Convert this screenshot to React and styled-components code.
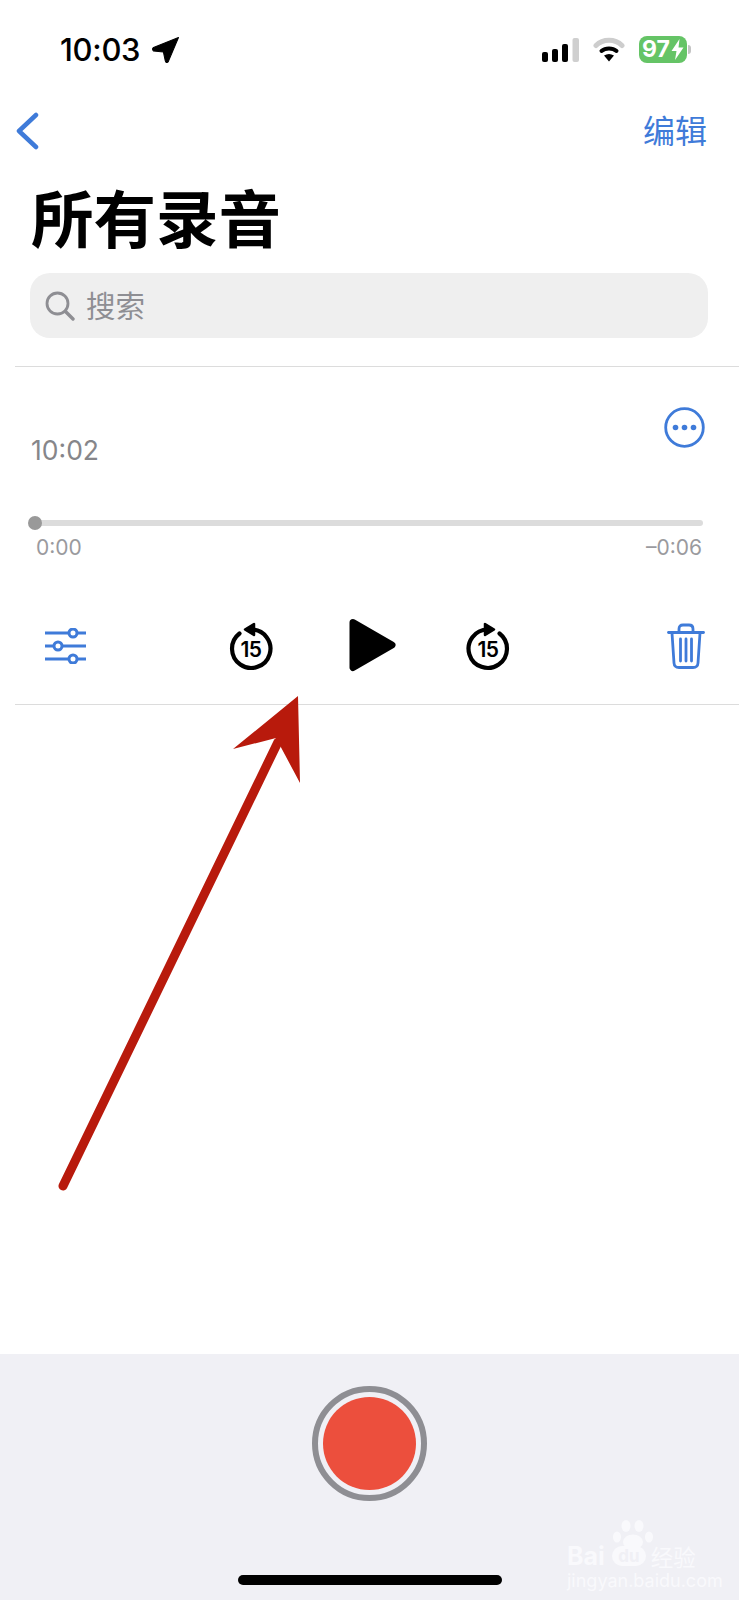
import styled, { createGlobalStyle } from "styled-components";

const BLUE = "#3f7bd9";
const CJK = `"Noto Sans CJK SC", "Noto Sans", sans-serif`;
const LATIN = `Inter, "Liberation Sans", sans-serif`;

export default function App() {
  return (
    <Page>
      <GlobalStyle />
      <StatusBar>
        <Clock>
          10:03
          <LocationIcon />
        </Clock>
        <StatusIcons>
          <SignalIcon />
          <WifiIcon />
          <Battery>
            97
            <BoltIcon />
          </Battery>
        </StatusIcons>
      </StatusBar>

      <NavBar>
        <BackIcon />
        <EditLabel>编辑</EditLabel>
      </NavBar>

      <Title>所有录音</Title>

      <SearchBox>
        <SearchIcon />
        <SearchText>搜索</SearchText>
      </SearchBox>

      <Divider />

      <Recording>
        <RecordingHead>
          <RecordingTime>10:02</RecordingTime>
          <MoreIcon />
        </RecordingHead>
        <Track>
          <Knob />
        </Track>
        <TrackLabels>
          <span>0:00</span>
          <span>–0:06</span>
        </TrackLabels>
        <Controls>
          <SlidersIcon />
          <Transport>
            <SkipIcon />
            <PlayIcon />
            <SkipIcon forward />
          </Transport>
          <TrashIcon />
        </Controls>
      </Recording>

      <Divider />

      <Toolbar>
        <RecordRing>
          <RecordDot />
        </RecordRing>
        <HomeBar />
        <Watermark>
          <PawIcon />
          <WatermarkLogo>
            <span>Bai</span>
            <WatermarkDu>du</WatermarkDu>
            <WatermarkCn>经验</WatermarkCn>
          </WatermarkLogo>
          <WatermarkUrl>jingyan.baidu.com</WatermarkUrl>
        </Watermark>
      </Toolbar>

      <ArrowOverlay viewBox="0 0 739 1600">
        <line x1="63" y1="1186" x2="278" y2="742" stroke="#b81a0c" strokeWidth="9" strokeLinecap="round" />
        <polygon points="298,696 233,749 276,738 300,783" fill="#b81a0c" />
      </ArrowOverlay>
    </Page>
  );
}

function LocationIcon() {
  return (
    <InlineSvg width="27" height="26" viewBox="0 0 26 25">
      <path d="M25.5 0.5 L15.5 24 Q13.5 25.5 12.8 23 L11 14.5 L1.5 13.5 Q-0.5 11.5 1.5 10 Z" fill="#000" stroke="#000" strokeWidth="1" strokeLinejoin="round" />
    </InlineSvg>
  );
}

function SignalIcon() {
  return (
    <svg width="37" height="24" viewBox="0 0 37 24">
      <rect x="0" y="14" width="6" height="10" rx="2" fill="#000" />
      <rect x="10" y="11" width="6" height="13" rx="2" fill="#000" />
      <rect x="20" y="6" width="6" height="18" rx="2" fill="#000" />
      <rect x="30.5" y="0" width="6.5" height="24" rx="2" fill="#cfcfcf" />
    </svg>
  );
}

function WifiIcon() {
  return (
    <svg width="32" height="25" viewBox="0 0 32 25">
      <path d="M3 8.5 C10 1.5 22 1.5 29 8.5" fill="none" stroke="#cdcdcd" strokeWidth="5" strokeLinecap="round" />
      <path d="M8.5 14 C12.5 10.5 19.5 10.5 23.5 14" fill="none" stroke="#000" strokeWidth="4" strokeLinecap="round" />
      <path d="M11 18.5 Q16 15.5 21 18.5 L16 24.5 Z" fill="#000" />
    </svg>
  );
}

function BoltIcon() {
  return (
    <svg width="13" height="21" viewBox="0 0 13 21">
      <path d="M8.5 0 L0.5 12 H5.5 L4 21 L12.5 8.5 H7.5 Z" fill="#fff" />
    </svg>
  );
}

function BackIcon() {
  return (
    <svg width="24" height="38" viewBox="0 0 24 38">
      <path d="M21 3 L4 19 L21 35" fill="none" stroke={BLUE} strokeWidth="4.5" strokeLinecap="round" strokeLinejoin="round" />
    </svg>
  );
}

function SearchIcon() {
  return (
    <svg width="30" height="30" viewBox="0 0 30 30">
      <circle cx="12.5" cy="12.5" r="10.5" fill="none" stroke="#8e8e93" strokeWidth="2.8" />
      <path d="M20.5 20.5 L28 28" stroke="#8e8e93" strokeWidth="3.4" strokeLinecap="round" />
    </svg>
  );
}

function MoreIcon() {
  return (
    <svg width="41" height="41" viewBox="0 0 41 41">
      <circle cx="20.5" cy="20.5" r="18.8" fill="none" stroke={BLUE} strokeWidth="2.8" />
      <circle cx="11.5" cy="20.5" r="2.8" fill={BLUE} />
      <circle cx="20.5" cy="20.5" r="2.8" fill={BLUE} />
      <circle cx="29.5" cy="20.5" r="2.8" fill={BLUE} />
    </svg>
  );
}

function SlidersIcon() {
  return (
    <svg width="41" height="36" viewBox="0 0 41 36">
      <g stroke={BLUE} strokeWidth="3" fill="#fff">
        <path d="M0 5 H41 M0 18 H41 M0 31 H41" />
        <circle cx="28" cy="5" r="4" />
        <circle cx="13" cy="18" r="4" />
        <circle cx="28" cy="31" r="4" />
      </g>
    </svg>
  );
}

function SkipIcon({ forward }) {
  return (
    <svg width="44" height="50" viewBox="0 0 44 50">
      <g transform={forward ? "translate(44 0) scale(-1 1)" : undefined}>
        <path d="M22 8.5 A19.2 19.2 0 1 1 10.5 12.5" fill="none" stroke="#000" strokeWidth="4.2" strokeLinecap="round" />
        <path d="M16 8.5 L25 3 V14 Z" fill="#000" stroke="#000" strokeWidth="2.5" strokeLinejoin="round" />
      </g>
      <SkipNumber x="22" y="36" textAnchor="middle">
        15
      </SkipNumber>
    </svg>
  );
}

function PlayIcon() {
  return (
    <svg width="47" height="54" viewBox="0 0 47 54">
      <path d="M4 4.5 L43 27 L4 49.5 Z" fill="#000" stroke="#000" strokeWidth="7" strokeLinejoin="round" />
    </svg>
  );
}

function TrashIcon() {
  return (
    <svg width="38" height="46" viewBox="0 0 38 46">
      <g fill="none" stroke={BLUE} strokeWidth="2.8" strokeLinecap="round" strokeLinejoin="round">
        <path d="M1.5 9.5 H36.5" />
        <path d="M12 9 V6 Q12 2 16 2 H22 Q26 2 26 6 V9" />
        <path d="M5 10 L7 40 Q7.3 44.5 12 44.5 H26 Q30.7 44.5 31 40 L33 10" />
        <path d="M13.5 16 V38 M19 16 V38 M24.5 16 V38" />
      </g>
    </svg>
  );
}

function PawIcon() {
  return (
    <PawSvg width="42" height="30" viewBox="0 0 42 30">
      <g fill="#f9f9fc">
        <ellipse cx="5" cy="17" rx="4" ry="5.5" />
        <ellipse cx="14" cy="6" rx="4.5" ry="6" />
        <ellipse cx="27" cy="6" rx="4.5" ry="6" />
        <ellipse cx="37" cy="17" rx="4" ry="5.5" />
        <ellipse cx="21" cy="22" rx="10" ry="7.5" />
      </g>
    </PawSvg>
  );
}

const GlobalStyle = createGlobalStyle`
  html, body {
    margin: 0;
    padding: 0;
    background: #ffffff;
  }
`;

const Page = styled.div`
  position: relative;
  display: flex;
  flex-direction: column;
  width: 739px;
  height: 1600px;
  overflow: hidden;
  background: #ffffff;
  font-family: ${LATIN};
`;

const InlineSvg = styled.svg`
  margin-left: 12px;
`;

const StatusBar = styled.div`
  display: flex;
  justify-content: space-between;
  align-items: center;
  height: 99px;
  padding: 0 52px 0 60px;
`;

const Clock = styled.div`
  display: flex;
  align-items: center;
  font-size: 31px;
  font-weight: 500;
  letter-spacing: -0.3px;
  color: #000000;
`;

const StatusIcons = styled.div`
  display: flex;
  align-items: center;
  gap: 14px;
`;

const Battery = styled.div`
  position: relative;
  display: flex;
  align-items: center;
  justify-content: center;
  gap: 1px;
  width: 48px;
  height: 27px;
  border-radius: 8px;
  background: #65c466;
  color: #ffffff;
  font-size: 23px;
  font-weight: 700;
  line-height: 27px;

  &::after {
    content: "";
    position: absolute;
    right: -4px;
    top: 9px;
    width: 3px;
    height: 9px;
    border-radius: 0 3px 3px 0;
    background: #c4c4c4;
  }
`;

const NavBar = styled.div`
  display: flex;
  justify-content: space-between;
  align-items: center;
  height: 64px;
  padding: 0 32px 0 15px;
`;

const EditLabel = styled.div`
  margin-bottom: 4px;
  font-family: ${CJK};
  font-size: 32px;
  line-height: 40px;
  color: ${BLUE};
`;

const Title = styled.h1`
  margin: 0;
  padding-left: 31px;
  height: 110px;
  font-family: ${CJK};
  font-size: 62.5px;
  font-weight: 700;
  line-height: 106px;
  color: #000000;
`;

const SearchBox = styled.div`
  display: flex;
  align-items: center;
  gap: 11px;
  height: 65px;
  margin: 0 31px 0 30px;
  padding-left: 15px;
  border-radius: 20px;
  background: #efefef;
`;

const SearchText = styled.span`
  margin-bottom: 4px;
  font-family: ${CJK};
  font-size: 29.5px;
  line-height: 40px;
  color: #8e8e93;
`;

const Divider = styled.div`
  flex: none;
  height: 1px;
  margin-left: 15px;
  background: #dcdcdc;

  ${SearchBox} + & {
    margin-top: 28px;
  }
`;

const Recording = styled.section`
  padding: 0 34px 31px 29px;
`;

const RecordingHead = styled.div`
  display: flex;
  justify-content: space-between;
  align-items: flex-start;
  height: 97px;
  padding-top: 40px;
  box-sizing: border-box;
`;

const RecordingTime = styled.div`
  margin: 29px 0 0 2px;
  font-size: 26.5px;
  line-height: 28px;
  color: #86868a;
`;

const Track = styled.div`
  position: relative;
  height: 6px;
  margin: 56px 2px 0 0;
  border-radius: 3px;
  background: #dcdcdc;
`;

const Knob = styled.div`
  position: absolute;
  left: -1px;
  top: -4px;
  width: 14px;
  height: 14px;
  border-radius: 50%;
  background: #999999;
`;

const TrackLabels = styled.div`
  display: flex;
  justify-content: space-between;
  margin-top: 9px;
  padding: 0 3px 0 7px;
  font-size: 21px;
  line-height: 26px;
  color: #9a9a9e;
`;

const Controls = styled.div`
  display: flex;
  align-items: center;
  height: 54px;
  margin-top: 58px;
  padding-left: 16px;
`;

const Transport = styled.div`
  display: flex;
  align-items: center;
  gap: 74px;
  margin-left: 143px;
  margin-right: auto;

  & > svg:nth-child(2) {
    margin: -2px -4px 0 2px;
  }
`;

const SkipNumber = styled.text`
  font-family: ${LATIN};
  font-size: 21px;
  font-weight: 600;
  letter-spacing: -0.5px;
  fill: #000000;
`;

const Toolbar = styled.footer`
  position: relative;
  flex: 1;
  display: flex;
  flex-direction: column;
  align-items: center;
  margin-top: 649px;
  background: #f0f0f5;
`;

const RecordRing = styled.div`
  display: flex;
  align-items: center;
  justify-content: center;
  box-sizing: border-box;
  width: 115px;
  height: 115px;
  margin-top: 32px;
  border: 6px solid #8e8e93;
  border-radius: 50%;
`;

const RecordDot = styled.div`
  width: 93px;
  height: 93px;
  border-radius: 50%;
  background: #ec4f3d;
`;

const HomeBar = styled.div`
  width: 264px;
  height: 10px;
  margin-top: 74px;
  border-radius: 5px;
  background: #000000;
`;

const Watermark = styled.div`
  position: absolute;
  left: 567px;
  top: 166px;
  width: 136px;
  color: #f9f9fc;
`;

const PawSvg = styled.svg`
  display: block;
  margin-left: 45px;
`;

const WatermarkLogo = styled.div`
  display: flex;
  align-items: center;
  height: 24px;
  margin-top: -6px;
  font-family: ${LATIN};
  font-size: 25px;
  font-weight: 700;
  line-height: 24px;
  white-space: nowrap;
`;

const WatermarkDu = styled.span`
  width: 34px;
  margin: 0 5px 0 7px;
  border-radius: 10px;
  background: #f9f9fc;
  color: #f0f0f5;
  font-size: 17px;
  line-height: 20px;
  text-align: center;
`;

const WatermarkCn = styled.span`
  font-family: ${CJK};
  font-size: 22.5px;
  font-weight: 400;
`;

const WatermarkUrl = styled.div`
  margin-top: 5px;
  font-family: ${LATIN};
  font-size: 18px;
  line-height: 16px;
  white-space: nowrap;
`;

const ArrowOverlay = styled.svg`
  position: absolute;
  left: 0;
  top: 0;
  width: 739px;
  height: 1600px;
  pointer-events: none;
`;
